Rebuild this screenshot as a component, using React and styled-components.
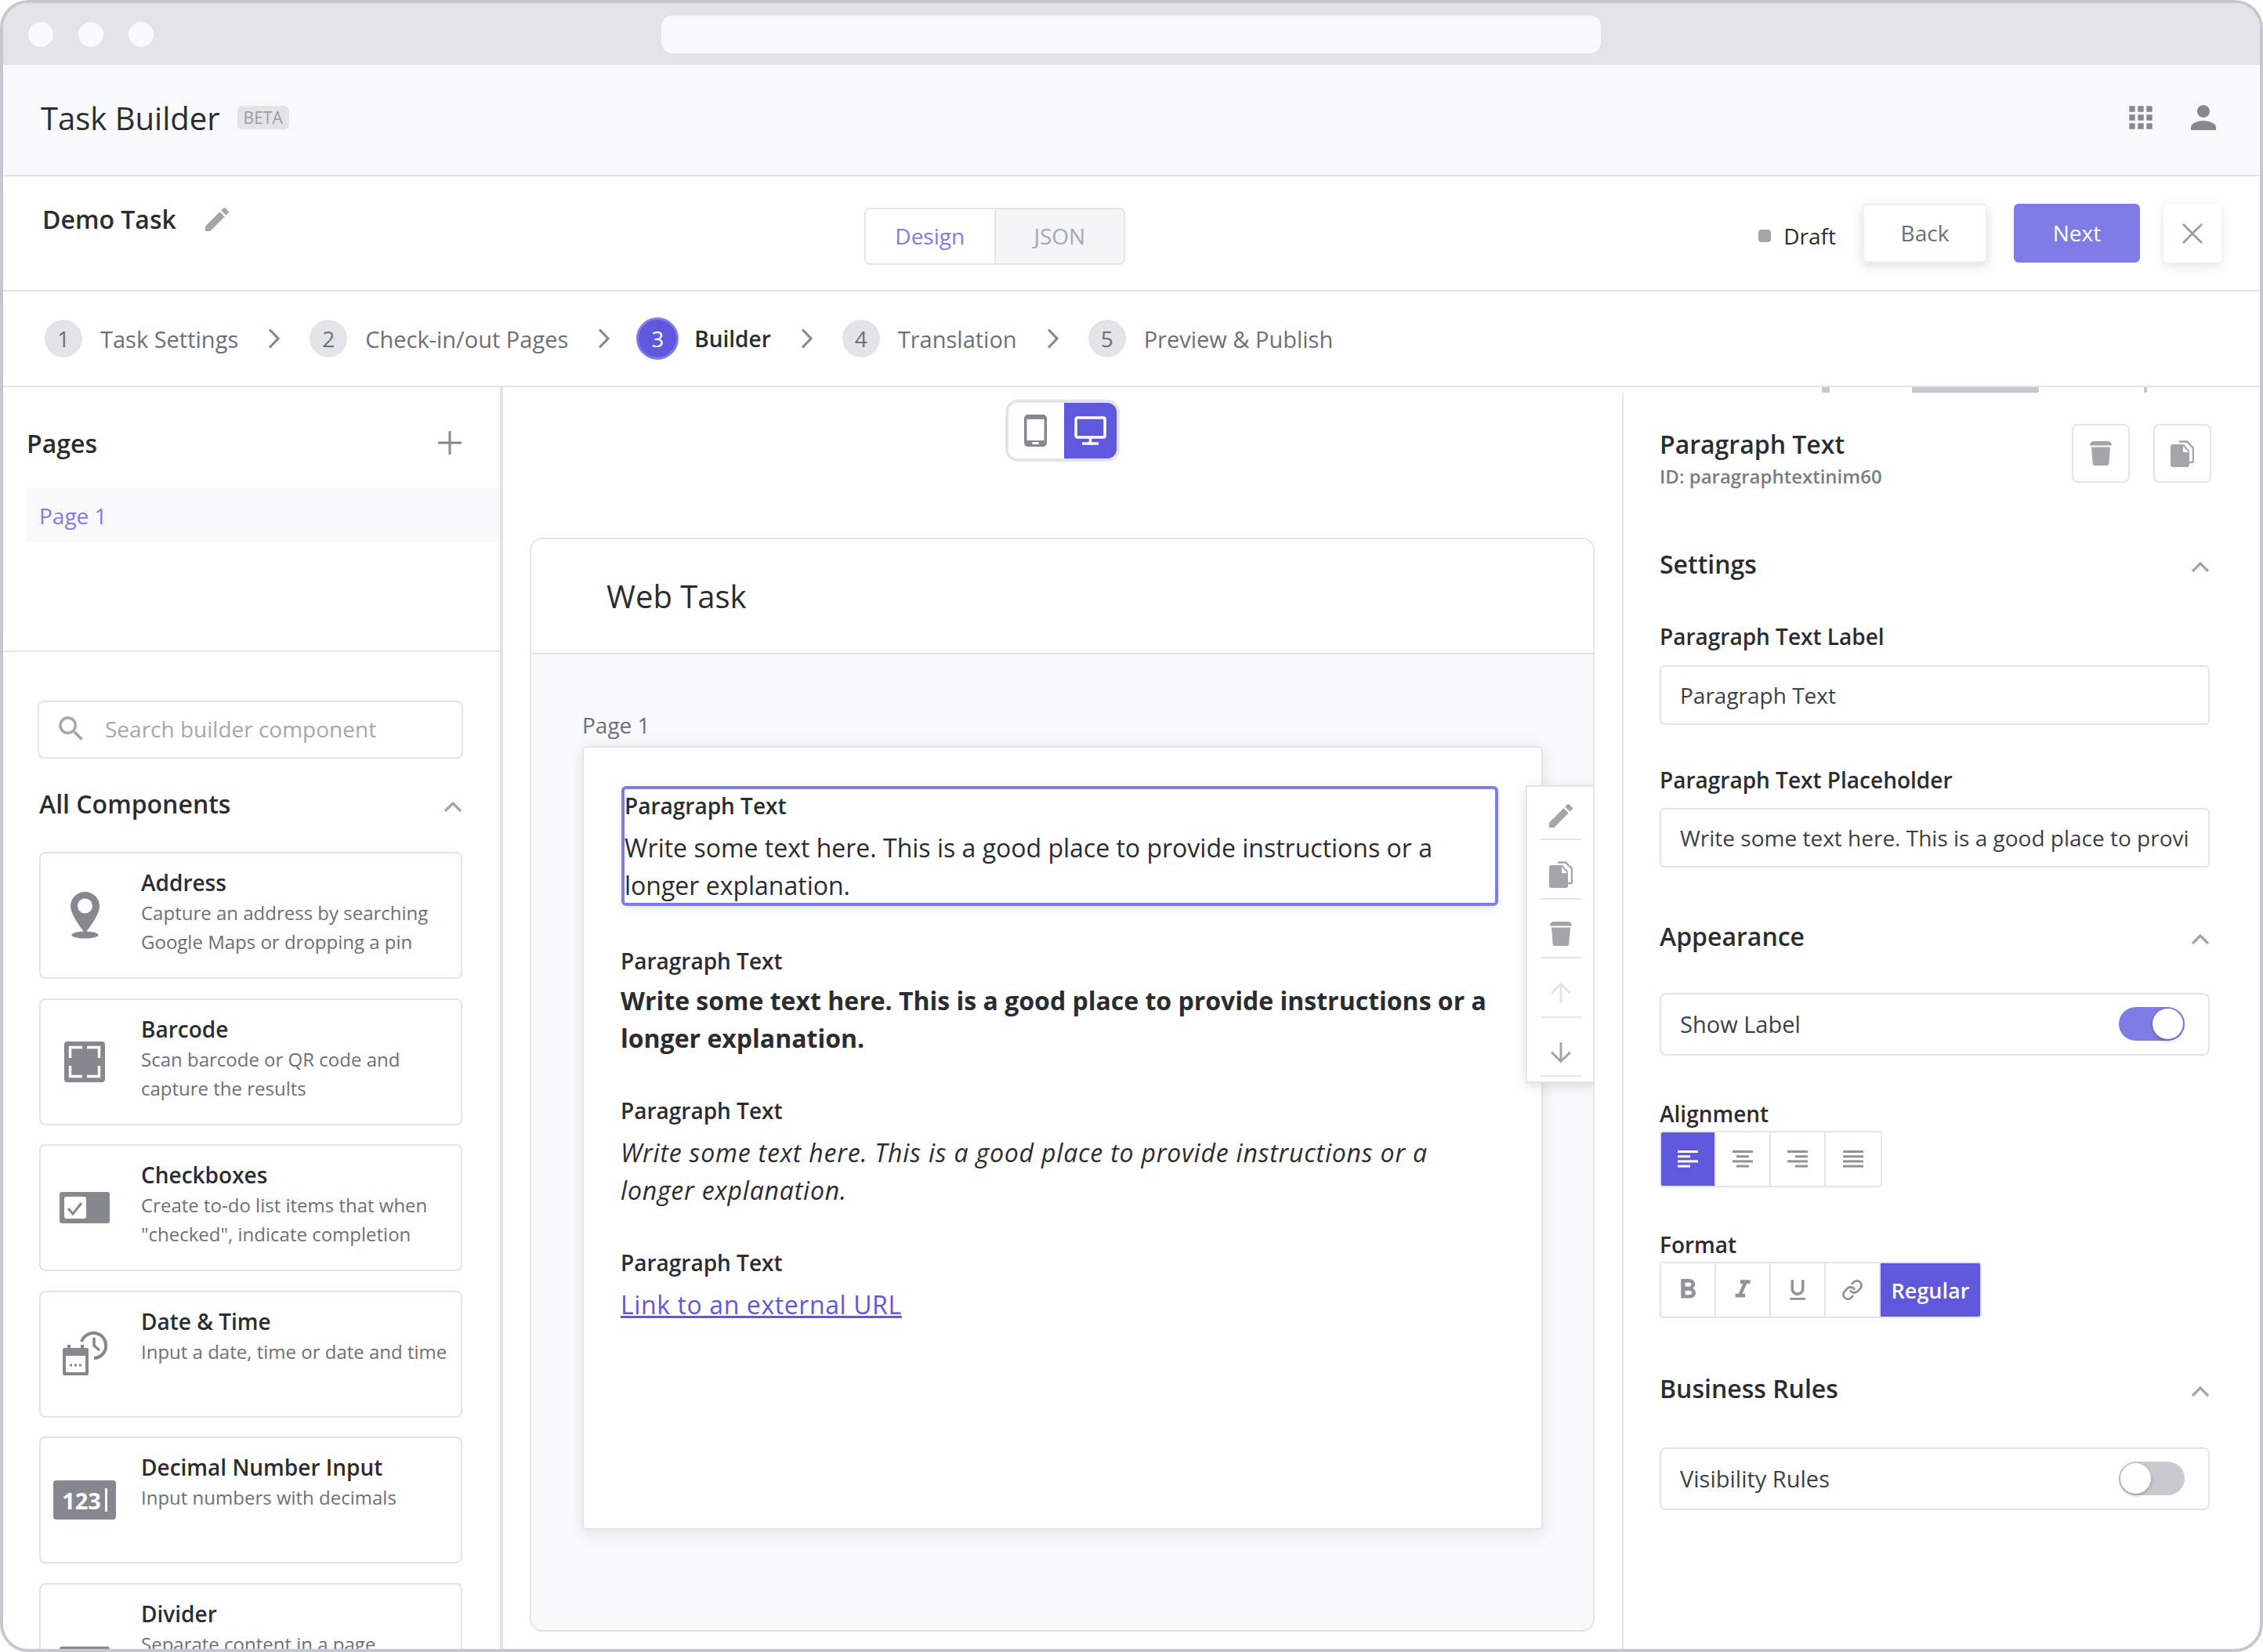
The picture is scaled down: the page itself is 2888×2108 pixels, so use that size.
import styled, { createGlobalStyle } from 'styled-components'
import {
  MdEdit,
  MdApps,
  MdPerson,
  MdSearch,
  MdFormatBold,
  MdFormatItalic,
  MdFormatUnderlined,
} from 'react-icons/md'
import { FiLink } from 'react-icons/fi'

const PURPLE = '#5f58dc'
const LILAC = '#807ce6'
const LINE = '#e3e4e8'
const ICON = '#85888e'
const SOFT = '#a3a5a9'
const INK = '#2b2c30'
const MUTED = '#6c7078'

const STEPS = [
  { n: 1, label: 'Task Settings' },
  { n: 2, label: 'Check-in/out Pages' },
  { n: 3, label: 'Builder', active: true },
  { n: 4, label: 'Translation' },
  { n: 5, label: 'Preview & Publish' },
]

const COMPONENTS = [
  { title: 'Address', desc: 'Capture an address by searching Google Maps or dropping a pin', icon: 'pin' },
  { title: 'Barcode', desc: 'Scan barcode or QR code and capture the results', icon: 'barcode' },
  { title: 'Checkboxes', desc: 'Create to-do list items that when "checked", indicate completion', icon: 'checkbox' },
  { title: 'Date & Time', desc: 'Input a date, time or date and time', icon: 'datetime' },
  { title: 'Decimal Number Input', desc: 'Input numbers with decimals', icon: 'number' },
  { title: 'Divider', desc: 'Separate content in a page', icon: 'divider' },
]

const BODY = 'Write some text here. This is a good place to provide instructions or a longer explanation.'

function ComponentGlyph({ kind }) {
  if (kind === 'pin') return <PinIcon />
  if (kind === 'barcode') return <BarcodeIcon />
  if (kind === 'checkbox') return <CheckboxIcon />
  if (kind === 'datetime') return <DateTimeIcon />
  if (kind === 'number') return <NumberBadge>123<i /></NumberBadge>
  return <DividerBar />
}

export default function App() {
  return (
    <>
      <GlobalStyle />
      <Frame>
        <TitleBar>
          <Dot />
          <Dot />
          <Dot />
          <UrlBar />
        </TitleBar>

        <AppHeader>
          <AppTitle>Task Builder</AppTitle>
          <BetaBadge>BETA</BetaBadge>
          <HeaderIcons>
            <MdApps size={44} />
            <MdPerson size={48} />
          </HeaderIcons>
        </AppHeader>

        <Toolbar>
          <TaskName>
            <span>Demo Task</span>
            <MdEdit size={40} color={SOFT} />
          </TaskName>
          <ModeSwitch>
            <ModeTab $active>Design</ModeTab>
            <ModeTab>JSON</ModeTab>
          </ModeSwitch>
          <ToolbarActions>
            <Status>Draft</Status>
            <GhostButton>Back</GhostButton>
            <PrimaryButton>Next</PrimaryButton>
            <CloseButton><CloseIcon /></CloseButton>
          </ToolbarActions>
        </Toolbar>

        <Stepper>
          {STEPS.map((step, i) => (
            <Step key={step.n} $active={step.active}>
              {i > 0 && <StepChevron />}
              <StepNumber $active={step.active}>{step.n}</StepNumber>
              <StepLabel $active={step.active}>{step.label}</StepLabel>
            </Step>
          ))}
        </Stepper>

        <Workspace>
          <LeftPanel>
            <PagesBlock>
              <PagesHead>
                <SectionTitle>Pages</SectionTitle>
                <PlusIcon />
              </PagesHead>
              <PageRow>Page 1</PageRow>
            </PagesBlock>
            <ComponentsBlock>
              <SearchBox>
                <MdSearch size={42} color={SOFT} />
                <span>Search builder component</span>
              </SearchBox>
              <AllHead>
                <SectionTitle>All Components</SectionTitle>
                <ChevronUp />
              </AllHead>
              <CardList>
                {COMPONENTS.map((c) => (
                  <ComponentCard key={c.title}>
                    <CardIcon><ComponentGlyph kind={c.icon} /></CardIcon>
                    <div>
                      <CardTitle>{c.title}</CardTitle>
                      <CardDesc>{c.desc}</CardDesc>
                    </div>
                  </ComponentCard>
                ))}
              </CardList>
            </ComponentsBlock>
          </LeftPanel>

          <Canvas>
            <DeviceSwitch>
              <DeviceTab><PhoneIcon /></DeviceTab>
              <DeviceTab $active><DesktopIcon /></DeviceTab>
            </DeviceSwitch>
            <WebCard>
              <WebCardHead>Web Task</WebCardHead>
              <WebCardBody>
                <PageCaption>Page 1</PageCaption>
                <PageSheet>
                  <SelectedParagraph>
                    <ParagraphLabel>Paragraph Text</ParagraphLabel>
                    <ParagraphBody>{BODY}</ParagraphBody>
                  </SelectedParagraph>
                  <Paragraph>
                    <ParagraphLabel>Paragraph Text</ParagraphLabel>
                    <ParagraphBody $bold>{BODY}</ParagraphBody>
                  </Paragraph>
                  <Paragraph>
                    <ParagraphLabel>Paragraph Text</ParagraphLabel>
                    <ParagraphBody $italic>{BODY}</ParagraphBody>
                  </Paragraph>
                  <Paragraph>
                    <ParagraphLabel>Paragraph Text</ParagraphLabel>
                    <ParagraphLink href="#">Link to an external URL</ParagraphLink>
                  </Paragraph>
                  <ActionRail>
                    <RailItem><MdEdit size={40} /></RailItem>
                    <RailItem><CopyIcon /></RailItem>
                    <RailItem><TrashIcon /></RailItem>
                    <RailItem $faint><ArrowIcon up /></RailItem>
                    <RailItem><ArrowIcon /></RailItem>
                  </ActionRail>
                </PageSheet>
              </WebCardBody>
            </WebCard>
          </Canvas>

          <RightPanel>
            <ScrollRemnant $left={253} $width={10} />
            <ScrollRemnant $left={368} $width={162} />
            <ScrollRemnant $left={664} $width={4} />
            <InspectorHead>
              <div>
                <InspectorTitle>Paragraph Text</InspectorTitle>
                <InspectorId>ID: paragraphtextinim60</InspectorId>
              </div>
              <InspectorActions>
                <SquareButton><TrashIcon /></SquareButton>
                <SquareButton><CopyIcon /></SquareButton>
              </InspectorActions>
            </InspectorHead>

            <GroupHead $top={74}>
              <SectionTitle>Settings</SectionTitle>
              <ChevronUp />
            </GroupHead>
            <FieldLabel $top={52}>Paragraph Text Label</FieldLabel>
            <TextField $top={19}><span>Paragraph Text</span></TextField>
            <FieldLabel $top={52}>Paragraph Text Placeholder</FieldLabel>
            <TextField $top={18}><span>{BODY}</span></TextField>

            <GroupHead $top={66}>
              <SectionTitle>Appearance</SectionTitle>
              <ChevronUp />
            </GroupHead>
            <ToggleRow $top={50}>
              <span>Show Label</span>
              <Toggle $on />
            </ToggleRow>
            <FieldLabel $top={56}>Alignment</FieldLabel>
            <ButtonGroup>
              <GroupCell $active><AlignIcon align="left" /></GroupCell>
              <GroupCell><AlignIcon align="center" /></GroupCell>
              <GroupCell><AlignIcon align="right" /></GroupCell>
              <GroupCell><AlignIcon align="justify" /></GroupCell>
            </ButtonGroup>
            <FieldLabel $top={55}>Format</FieldLabel>
            <ButtonGroup>
              <GroupCell><MdFormatBold size={42} /></GroupCell>
              <GroupCell><MdFormatItalic size={38} /></GroupCell>
              <GroupCell><MdFormatUnderlined size={34} /></GroupCell>
              <GroupCell><FiLink size={28} strokeWidth={2.4} /></GroupCell>
              <GroupCell $active $wide>Regular</GroupCell>
            </ButtonGroup>

            <GroupHead $top={68}>
              <SectionTitle>Business Rules</SectionTitle>
              <ChevronUp />
            </GroupHead>
            <ToggleRow $top={53}>
              <span>Visibility Rules</span>
              <Toggle />
            </ToggleRow>
          </RightPanel>
        </Workspace>
      </Frame>
    </>
  )
}

function PinIcon() {
  return (
    <svg width="37" height="60" viewBox="0 0 37 60" fill={ICON}>
      <path d="M18.5 0C8.3 0 0 8.2 0 18.3c0 9.6 9.5 23 18.5 34.7C27.5 41.3 37 27.9 37 18.3 37 8.2 28.7 0 18.5 0z" />
      <circle cx="18.5" cy="18" r="9.5" fill="#fff" />
      <ellipse cx="18.5" cy="55" rx="17" ry="4.5" />
    </svg>
  )
}

function BarcodeIcon() {
  return (
    <svg width="52" height="52" viewBox="0 0 52 52">
      <rect width="52" height="52" rx="4" fill={ICON} />
      <path d="M23 7.5H7.5V21M29 7.5h15.5V21M23 44.5H7.5V31M29 44.5h15.5V31" fill="none" stroke="#fff" strokeWidth="3.4" />
    </svg>
  )
}

function CheckboxIcon() {
  return (
    <svg width="64" height="40" viewBox="0 0 64 40">
      <rect width="64" height="40" rx="3" fill={ICON} />
      <rect x="6" y="6" width="28" height="28" rx="3" fill="#fff" />
      <path d="M11 21l6 7 11-14" fill="none" stroke={ICON} strokeWidth="3" />
    </svg>
  )
}

function DateTimeIcon() {
  return (
    <svg width="58" height="57" viewBox="0 0 58 57" fill="none">
      <path d="M25 13a16 16 0 1 1 16 21" stroke={ICON} strokeWidth="4" />
      <path d="M41 8v10l7 6" stroke={ICON} strokeWidth="3.5" />
      <path d="M3 21h29a2 2 0 0 1 2 2v31a2 2 0 0 1-2 2H3a2 2 0 0 1-2-2V23a2 2 0 0 1 2-2z" fill={ICON} />
      <rect x="7" y="17" width="4" height="6" fill={ICON} />
      <rect x="24" y="17" width="4" height="6" fill={ICON} />
      <rect x="5" y="31" width="25" height="21" fill="#fff" />
      <path d="M10 43h3M16 43h3M22 43h3" stroke={ICON} strokeWidth="3" />
    </svg>
  )
}

function PlusIcon() {
  return (
    <svg width="30" height="30" viewBox="0 0 30 30">
      <path d="M15 0v30M0 15h30" stroke={ICON} strokeWidth="3" />
    </svg>
  )
}

function CloseIcon() {
  return (
    <svg width="26" height="26" viewBox="0 0 26 26">
      <path d="M1 1l24 24M25 1L1 25" stroke="#9a9da3" strokeWidth="2.8" />
    </svg>
  )
}

function ChevronUp() {
  return (
    <svg width="24" height="14" viewBox="0 0 24 14" fill="none">
      <path d="M2 12L12 2l10 10" stroke={SOFT} strokeWidth="3.2" />
    </svg>
  )
}

function StepChevron() {
  return (
    <svg width="15" height="26" viewBox="0 0 15 26" fill="none">
      <path d="M2 1.5L13 13 2 24.5" stroke={ICON} strokeWidth="3.2" />
    </svg>
  )
}

function PhoneIcon() {
  return (
    <svg width="29" height="41" viewBox="0 0 29 41">
      <rect width="29" height="41" rx="5" fill={ICON} />
      <rect x="3.5" y="6" width="22" height="27" fill="#fff" />
      <rect x="10.5" y="35" width="8" height="3" fill="#fff" />
    </svg>
  )
}

function DesktopIcon() {
  return (
    <svg width="41" height="37" viewBox="0 0 41 37" fill="none">
      <rect x="2" y="2" width="37" height="25" rx="2" stroke="#fff" strokeWidth="3.5" />
      <path d="M20.5 28v6M10 35h21" stroke="#fff" strokeWidth="3.5" />
    </svg>
  )
}

function CopyIcon() {
  return (
    <svg width="30" height="34" viewBox="0 0 30 34">
      <path d="M11 1.5h10l8 8v17a1.5 1.5 0 0 1-1.5 1.5H23" fill="none" stroke={SOFT} strokeWidth="2.4" />
      <path d="M3 5h14l7 8v18a3 3 0 0 1-3 3H3a3 3 0 0 1-3-3V8a3 3 0 0 1 3-3z" fill={SOFT} />
      <path d="M16 7l7 8h-7z" fill="#fff" />
    </svg>
  )
}

function TrashIcon() {
  return (
    <svg width="28" height="31" viewBox="0 0 28 31" fill={SOFT}>
      <path d="M5 0h18c2.5 0 5 2 5 5.5H0C0 2 2.5 0 5 0z" />
      <path d="M2 7.5h24l-1.6 20.5a3 3 0 0 1-3 3H6.6a3 3 0 0 1-3-3z" />
    </svg>
  )
}

function ArrowIcon({ up }) {
  return (
    <svg width="28" height="28" viewBox="0 0 28 28" fill="none">
      <path d={up ? 'M14 27V3M2 14.5L14 2.5l12 12' : 'M14 1v24M2 13.5l12 12 12-12'} stroke="currentColor" strokeWidth="3" />
    </svg>
  )
}

function AlignIcon({ align }) {
  const rows = [26, 16, 26, 16]
  return (
    <svg width="26" height="22" viewBox="0 0 26 22" fill="currentColor">
      {rows.map((w, i) => {
        const width = align === 'justify' ? 26 : w
        let x = 0
        if (align === 'center') x = (26 - width) / 2
        if (align === 'right') x = 26 - width
        return <rect key={i} x={x} y={i * 6.2} width={width} height="3" />
      })}
    </svg>
  )
}

const GlobalStyle = createGlobalStyle`
  html, body {
    margin: 0;
    padding: 0;
    background: #fff;
  }
  body {
    font-family: "Open Sans", "Liberation Sans", sans-serif;
    color: ${INK};
    overflow: hidden;
  }
  * {
    box-sizing: border-box;
  }
`

const Frame = styled.div`
  width: 2888px;
  height: 2108px;
  border: 4px solid #c5c8cf;
  border-radius: 36px;
  overflow: hidden;
  display: flex;
  flex-direction: column;
  background: #fff;
`

const TitleBar = styled.div`
  height: 79px;
  flex: none;
  display: flex;
  align-items: center;
  gap: 32px;
  padding-left: 32px;
  background: ${LINE};
`

const Dot = styled.span`
  width: 32px;
  height: 32px;
  border-radius: 50%;
  background: #f8f9fb;
`

const UrlBar = styled.div`
  width: 1199px;
  height: 48px;
  margin-left: 616px;
  border-radius: 14px;
  background: #f8f9fb;
`

const AppHeader = styled.header`
  height: 142px;
  flex: none;
  display: flex;
  align-items: center;
  padding: 0 48px 6px;
  background: #f8f9fb;
  border-bottom: 2px solid ${LINE};
`

const AppTitle = styled.h1`
  margin: 0;
  font-size: 40px;
  font-weight: 400;
  color: ${INK};
`

const BetaBadge = styled.span`
  margin-left: 22px;
  padding: 0 8px;
  height: 30px;
  line-height: 30px;
  font-size: 21px;
  color: #9a9da3;
  background: ${LINE};
  border-radius: 6px;
`

const HeaderIcons = styled.div`
  margin-left: auto;
  display: flex;
  align-items: center;
  gap: 34px;
  color: ${ICON};
`

const Toolbar = styled.div`
  height: 147px;
  flex: none;
  display: flex;
  align-items: flex-start;
  padding: 35px 49px 0 50px;
  border-bottom: 2px solid ${LINE};
`

const TaskName = styled.div`
  width: 1049px;
  height: 40px;
  margin-top: -1px;
  display: flex;
  align-items: center;
  gap: 32px;
  font-size: 32px;
  font-weight: 600;
  color: ${INK};

  svg {
    margin-top: 2px;
  }
`

const ModeSwitch = styled.div`
  width: 333px;
  height: 73px;
  margin-top: 5px;
  display: flex;
  border: 2px solid ${LINE};
  border-radius: 8px;
  overflow: hidden;
`

const ModeTab = styled.div`
  flex: 1;
  display: flex;
  align-items: center;
  justify-content: center;
  padding-bottom: 1px;
  font-size: 28px;
  color: ${(p) => (p.$active ? LILAC : '#a5a8ae')};
  background: ${(p) => (p.$active ? '#fff' : '#f4f5f6')};
  border-right: ${(p) => (p.$active ? `2px solid ${LINE}` : 'none')};
`

const ToolbarActions = styled.div`
  margin-left: auto;
  display: flex;
  align-items: flex-start;
`

const Status = styled.div`
  height: 75px;
  display: flex;
  align-items: center;
  gap: 16px;
  padding-top: 6px;
  margin-right: 34px;
  font-size: 28px;
  color: ${INK};

  &::before {
    content: '';
    width: 16px;
    height: 16px;
    border-radius: 4px;
    background: ${SOFT};
  }
`

const GhostButton = styled.button`
  width: 159px;
  height: 75px;
  margin-right: 34px;
  padding: 0 0 1px;
  font: 400 28px "Open Sans", sans-serif;
  color: ${MUTED};
  background: #fff;
  border: 2px solid #eeeff1;
  border-radius: 6px;
  box-shadow: 0 4px 14px rgba(60, 64, 80, 0.18);
`

const PrimaryButton = styled.button`
  width: 161px;
  height: 75px;
  margin-right: 30px;
  padding: 0 0 1px;
  font: 400 28px "Open Sans", sans-serif;
  color: #fff;
  background: ${LILAC};
  border: none;
  border-radius: 6px;
`

const CloseButton = styled.button`
  width: 74px;
  height: 75px;
  display: flex;
  align-items: center;
  justify-content: center;
  padding: 0;
  background: #fff;
  border: none;
  border-radius: 6px;
  box-shadow: 0 4px 14px rgba(60, 64, 80, 0.14);
`

const Stepper = styled.nav`
  height: 122px;
  flex: none;
  display: flex;
  align-items: center;
  padding-left: 53px;
  border-bottom: 2px solid ${LINE};
`

const Step = styled.div`
  display: flex;
  align-items: center;

  svg {
    margin: 0 ${(p) => (p.$active ? 34 : 38)}px 0 38px;
  }
`

const StepNumber = styled.span`
  width: ${(p) => (p.$active ? 54 : 48)}px;
  height: ${(p) => (p.$active ? 54 : 48)}px;
  display: flex;
  align-items: center;
  justify-content: center;
  border-radius: 50%;
  font-size: 28px;
  color: ${(p) => (p.$active ? '#fff' : MUTED)};
  background: ${(p) => (p.$active ? PURPLE : LINE)};
  border: ${(p) => (p.$active ? `3px solid ${LILAC}` : 'none')};
  margin-right: ${(p) => (p.$active ? 20 : 23)}px;
`

const StepLabel = styled.span`
  font-size: ${(p) => (p.$active ? 28 : 29)}px;
  font-weight: ${(p) => (p.$active ? 600 : 400)};
  color: ${(p) => (p.$active ? INK : MUTED)};
`

const Workspace = styled.main`
  flex: 1;
  min-height: 0;
  display: flex;
`

const LeftPanel = styled.aside`
  width: 638px;
  flex: none;
  overflow: hidden;
  border-right: 4px solid ${LINE};
`

const PagesBlock = styled.section`
  height: 338px;
  padding: 48px 0 0 30px;
  border-bottom: 2px solid ${LINE};
`

const PagesHead = styled.div`
  height: 48px;
  display: flex;
  align-items: center;
  justify-content: space-between;
  padding-right: 49px;

  svg {
    margin-top: -2px;
  }
`

const SectionTitle = styled.h2`
  margin: 0;
  font-size: 32px;
  line-height: 44px;
  font-weight: 600;
  color: ${INK};
`

const PageRow = styled.div`
  height: 70px;
  margin-top: 32px;
  padding: 2px 0 0 16px;
  display: flex;
  align-items: center;
  font-size: 28px;
  color: ${LILAC};
  background: #f8f9fb;
`

const ComponentsBlock = styled.section`
  padding: 62px 0 0 44px;
`

const SearchBox = styled.div`
  width: 543px;
  height: 74px;
  display: flex;
  align-items: center;
  gap: 22px;
  padding: 0 0 2px 20px;
  font-size: 28px;
  color: #a5a8ae;
  border: 2px solid ${LINE};
  border-radius: 8px;
`

const AllHead = styled.div`
  width: 540px;
  margin: 36px 0 0 2px;
  display: flex;
  align-items: center;
  justify-content: space-between;

  svg {
    margin-top: 8px;
  }
`

const CardList = styled.div`
  margin: 39px 0 0 2px;
  display: flex;
  flex-direction: column;
  gap: 24.5px;
`

const ComponentCard = styled.article`
  width: 540px;
  height: 162px;
  flex: none;
  display: grid;
  grid-template-columns: 112px 1fr;
  column-gap: 16px;
  padding-top: 17px;
  border: 2px solid ${LINE};
  border-radius: 8px;
`

const CardIcon = styled.div`
  height: 124px;
  display: flex;
  align-items: center;
  justify-content: center;
`

const CardTitle = styled.h3`
  margin: 0;
  font-size: 28px;
  line-height: 40px;
  font-weight: 600;
  color: ${INK};
`

const CardDesc = styled.p`
  margin: 0;
  width: 400px;
  font-size: 24px;
  line-height: 37px;
  color: ${MUTED};
`

const NumberBadge = styled.span`
  width: 80px;
  height: 50px;
  display: flex;
  align-items: center;
  justify-content: center;
  gap: 5px;
  font-size: 29px;
  font-weight: 700;
  color: #fff;
  background: ${ICON};
  border-radius: 4px;

  i {
    width: 3px;
    height: 30px;
    background: #fff;
  }
`

const DividerBar = styled.span`
  width: 64px;
  height: 40px;
  margin-top: 40px;
  background: ${ICON};
  border-radius: 3px;
`

const Canvas = styled.section`
  width: 1428px;
  flex: none;
  padding-top: 16px;
  display: flex;
  flex-direction: column;
`

const DeviceSwitch = styled.div`
  width: 146px;
  height: 79px;
  align-self: center;
  display: flex;
  border: 4px solid ${LINE};
  border-radius: 16px;
  overflow: hidden;
`

const DeviceTab = styled.div`
  flex: ${(p) => (p.$active ? '0 0 67px' : 1)};
  display: flex;
  align-items: center;
  justify-content: center;
  padding-right: ${(p) => (p.$active ? 0 : 3)}px;
  background: ${(p) => (p.$active ? PURPLE : '#fff')};
`

const WebCard = styled.div`
  width: 1359px;
  height: 1396px;
  margin: 97px 0 0 34px;
  display: flex;
  flex-direction: column;
  border: 2px solid ${LINE};
  border-radius: 16px;
  overflow: hidden;
`

const WebCardHead = styled.div`
  height: 147px;
  flex: none;
  display: flex;
  align-items: center;
  padding-left: 96px;
  font-size: 40px;
  color: ${INK};
  background: #fff;
  border-bottom: 2px solid ${LINE};
`

const WebCardBody = styled.div`
  flex: 1;
  padding: 70px 0 0 65px;
  background: #f8f9fb;
`

const PageCaption = styled.div`
  font-size: 28px;
  line-height: 40px;
  color: ${MUTED};
`

const PageSheet = styled.div`
  position: relative;
  width: 1226px;
  height: 1000px;
  margin-top: 7px;
  padding: 49px 0 0 47px;
  background: #fff;
  border: 2px solid ${LINE};
  border-radius: 6px;
  box-shadow: 0 4px 16px rgba(60, 64, 80, 0.12);
`

const Paragraph = styled.div`
  width: 1119px;
  margin-top: 50px;
`

const SelectedParagraph = styled.div`
  width: 1119px;
  height: 153px;
  margin-left: 1px;
  padding: 3px 0 0 0;
  border: 4px solid ${LILAC};
  border-radius: 6px;
  box-shadow: 0 3px 8px rgba(60, 64, 80, 0.14);

  & + ${Paragraph} {
    margin-top: 52px;
  }
`

const ParagraphLabel = styled.div`
  font-size: 28px;
  line-height: 36px;
  font-weight: 600;
  color: ${INK};
`

const ParagraphBody = styled.p`
  margin: ${(p) => (p.$bold ? '9px 0 4px' : '12px 0 0')};
  font-size: 32px;
  line-height: 48px;
  font-weight: ${(p) => (p.$bold ? 700 : 400)};
  font-style: ${(p) => (p.$italic ? 'italic' : 'normal')};
  letter-spacing: ${(p) => (p.$italic ? '0.8px' : 'normal')};
  color: ${INK};
`

const ParagraphLink = styled.a`
  display: block;
  margin-top: 12px;
  font-size: 32px;
  line-height: 48px;
  letter-spacing: 0.6px;
  color: ${PURPLE};
  text-decoration: underline;
`

const ActionRail = styled.div`
  position: absolute;
  top: 48px;
  left: 1202px;
  width: 90px;
  height: 380px;
  padding: 0 17px;
  background: #fff;
  border: 2px solid ${LINE};
  box-shadow: 0 4px 14px rgba(60, 64, 80, 0.16);
`

const RailItem = styled.div`
  height: 75.5px;
  padding-top: 15px;
  display: flex;
  align-items: center;
  justify-content: center;
  color: ${(p) => (p.$faint ? LINE : SOFT)};
  border-bottom: 2px solid ${LINE};

  &:first-child {
    height: 68px;
    padding-top: 8px;
  }
`

const RightPanel = styled.aside`
  position: relative;
  flex: 1;
  margin-top: 7px;
  padding-left: 46px;
  border-left: 2px solid ${LINE};
`

const ScrollRemnant = styled.span`
  position: absolute;
  top: -7px;
  left: ${(p) => p.$left}px;
  width: ${(p) => p.$width}px;
  height: 7px;
  background: #c5c8cf;
`

const InspectorHead = styled.div`
  width: 704px;
  padding-top: 40px;
  display: flex;
  justify-content: space-between;
`

const InspectorTitle = styled.div`
  margin-top: 4px;
  font-size: 32px;
  line-height: 44px;
  font-weight: 600;
  color: ${INK};
`

const InspectorId = styled.div`
  margin-top: 3px;
  font-size: 24px;
  line-height: 32px;
  font-weight: 600;
  color: #787c84;
`

const InspectorActions = styled.div`
  display: flex;
  gap: 30px;
`

const SquareButton = styled.div`
  width: 74px;
  height: 75px;
  display: flex;
  align-items: center;
  justify-content: center;
  border: 2px solid ${LINE};
  border-radius: 8px;
`

const GroupHead = styled.div`
  width: 702px;
  margin-top: ${(p) => p.$top}px;
  display: flex;
  align-items: center;
  justify-content: space-between;

  svg {
    margin-top: 8px;
  }
`

const FieldLabel = styled.div`
  margin-top: ${(p) => p.$top}px;
  font-size: 28px;
  line-height: 36px;
  font-weight: 600;
  color: ${INK};
`

const TextField = styled.div`
  width: 702px;
  height: 76px;
  margin-top: ${(p) => p.$top}px;
  padding: 0 26px 0 24px;
  font-size: 28px;
  line-height: 72px;
  color: #3d3f45;
  border: 2px solid ${LINE};
  border-radius: 6px;

  span {
    display: block;
    white-space: nowrap;
    overflow: hidden;
  }
`

const ToggleRow = styled.div`
  width: 702px;
  height: 80px;
  margin-top: ${(p) => p.$top}px;
  padding: 0 30px 2px 24px;
  display: flex;
  align-items: center;
  justify-content: space-between;
  font-size: 29px;
  color: #3d3f45;
  border: 2px solid ${LINE};
  border-radius: 8px;
`

const Toggle = styled.span`
  position: relative;
  width: 84px;
  height: 43px;
  border-radius: 22px;
  background: ${(p) => (p.$on ? LILAC : '#c8cacf')};

  &::after {
    content: '';
    position: absolute;
    top: 2px;
    left: ${(p) => (p.$on ? 43 : 2)}px;
    width: 39px;
    height: 39px;
    border-radius: 50%;
    background: #fff;
    box-shadow: 0 2px 5px rgba(0, 0, 0, 0.25);
  }
`

const ButtonGroup = styled.div`
  width: fit-content;
  height: 72px;
  margin-top: 4px;
  display: flex;
  border: 2px solid ${LINE};
  border-radius: 4px;
  overflow: hidden;
`

const GroupCell = styled.div`
  width: ${(p) => (p.$wide ? '127px' : '70px')};
  display: flex;
  align-items: center;
  justify-content: center;
  font-size: 27px;
  font-weight: 600;
  color: ${(p) => (p.$active ? '#fff' : '#90939a')};
  background: ${(p) => (p.$active ? PURPLE : '#fff')};
  border-right: 2px solid ${LINE};

  &:last-child {
    border-right: none;
  }
`
